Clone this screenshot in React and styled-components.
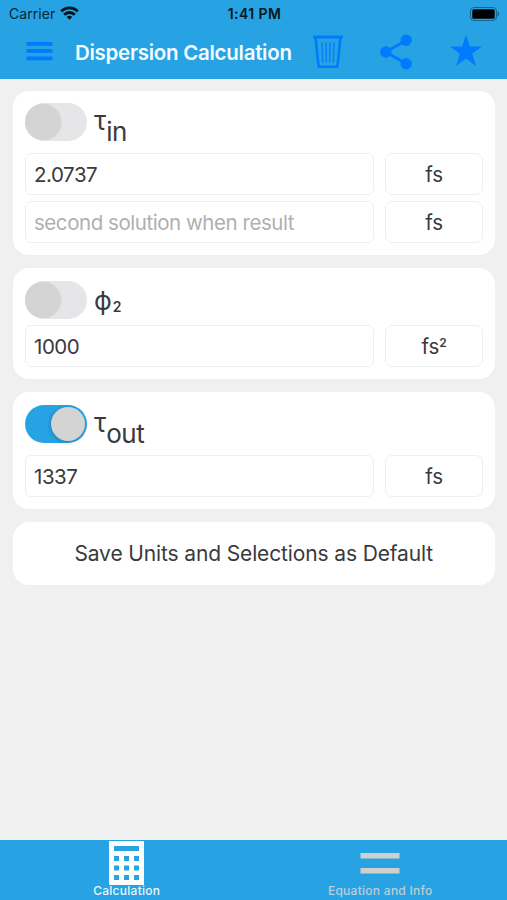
import React, { useState } from 'react';
import styled, { createGlobalStyle } from 'styled-components';

const GlobalStyle = createGlobalStyle`
  * {
    box-sizing: border-box;
  }

  body {
    margin: 0;
    background-color: #f0f0f0;
    font-family: Inter, 'Liberation Sans', sans-serif;
    color: #3a3a3c;
  }
`;

const Screen = styled.div`
  display: flex;
  flex-direction: column;
  height: 900px;
  overflow: hidden;
`;

const Header = styled.header`
  height: 79px;
  flex-shrink: 0;
  background-color: #27a3e3;
`;

const StatusBar = styled.div`
  display: grid;
  grid-template-columns: 1fr auto 1fr;
  align-items: center;
  height: 27px;
  padding: 0 7px 0 9px;
  font-size: 14px;
  color: #0b2533;
`;

const Carrier = styled.div`
  display: flex;
  align-items: center;
  gap: 5px;
  letter-spacing: 0.05px;
`;

const Clock = styled.div`
  font-weight: 600;
  letter-spacing: 0.4px;
  color: #06141c;
`;

const BatteryIcon = styled.svg`
  justify-self: end;
`;

const NavBar = styled.nav`
  display: flex;
  align-items: center;
  height: 50px;
  padding: 0 25px 0 26px;
  color: #007aff;
`;

const IconButton = styled.button`
  display: flex;
  padding: 0;
  margin-left: ${(props) => props.$gap || 0}px;
  border: none;
  background: none;
  color: inherit;
  cursor: pointer;
`;

const Title = styled.h1`
  width: 217px;
  margin: 1px 0 0 22px;
  font-size: 20.5px;
  font-weight: 600;
  letter-spacing: -0.28px;
  white-space: nowrap;
  color: #f4fbff;
`;

const Content = styled.main`
  flex: 1;
  display: flex;
  flex-direction: column;
  gap: 13.25px;
  padding: 11.6px 12.5px 0 13px;
`;

const Card = styled.section`
  padding: 12.5px 12px 12px;
  border-radius: 16px;
  background-color: #fff;
`;

const CardHeader = styled.div`
  display: flex;
  align-items: flex-start;
  gap: 7px;
  height: ${(props) => (props.$tall ? 50 : 44)}px;
`;

const Track = styled.button`
  display: flex;
  justify-content: ${(props) => (props.$on ? 'flex-end' : 'flex-start')};
  align-items: center;
  width: 62px;
  height: 38px;
  padding: ${(props) => (props.$on ? '0 2px' : '0')};
  border: none;
  border-radius: 19px;
  background-color: ${(props) => (props.$on ? '#27a3e3' : '#e6e6e8')};
  cursor: pointer;
`;

const Thumb = styled.span`
  width: ${(props) => (props.$on ? 34 : 36)}px;
  height: ${(props) => (props.$on ? 34 : 36)}px;
  border-radius: 50%;
  background-color: #d4d4d4;
  box-shadow: ${(props) => (props.$on ? '-1px 1px 4px rgba(0, 0, 0, 0.2)' : '1px 0 2px rgba(0, 0, 0, 0.04)')};
`;

const Symbol = styled.div`
  display: flex;
  align-items: flex-start;
  padding-top: ${(props) => props.$top}px;
  font-size: 26px;
  line-height: 32px;
`;

const Subscript = styled.span`
  margin-top: 11px;
  font-size: 26px;
  letter-spacing: -0.4px;
`;

const SmallSubscript = styled.span`
  margin: 6px 0 0 1px;
  font-size: 14px;
  font-weight: 600;
`;

const Fields = styled.div`
  display: grid;
  grid-template-columns: 349px 98px;
  column-gap: 11px;
  row-gap: 6px;
`;

const Input = styled.input`
  min-width: 0;
  height: 42px;
  padding: 1px 8px 0;
  border: 1px solid #efefef;
  border-radius: 6px;
  outline: none;
  background-color: #fff;
  color: #3a3a3c;
  font-family: inherit;
  font-size: 20.5px;
  letter-spacing: -0.45px;

  &::placeholder {
    color: #b0b0b0;
    opacity: 1;
  }
`;

const UnitButton = styled.button`
  height: 42px;
  padding: 1px 0 0;
  border: 1px solid #efefef;
  border-radius: 7px;
  background-color: #fff;
  color: #3a3a3c;
  font-family: inherit;
  font-size: 20.5px;
  letter-spacing: -0.2px;
`;

const Exponent = styled.sup`
  font-size: 12px;
  font-weight: 600;
  line-height: 0;
  vertical-align: 7px;
`;

const SaveButton = styled.button`
  height: 63px;
  border: none;
  border-radius: 16px;
  background-color: #fff;
  color: #3a3a3c;
  font-family: inherit;
  font-size: 21px;
  letter-spacing: -0.13px;
`;

const TabBar = styled.footer`
  display: grid;
  grid-template-columns: 1fr 1fr;
  height: 60px;
  flex-shrink: 0;
  background-color: #27a3e3;
`;

const Tab = styled.button`
  display: flex;
  flex-direction: column;
  align-items: center;
  padding: 1px 0 0;
  border: none;
  background: none;
  color: ${(props) => (props.$active ? '#fff' : '#ccd3d6')};
  font-family: inherit;
  cursor: pointer;
`;

const TabLabel = styled.span`
  margin-top: -1px;
  font-size: 12px;
  font-weight: 500;
  line-height: 14px;
  letter-spacing: 0.27px;
  opacity: 0.9;
`;

const WifiIcon = () => (
  <svg width="19" height="15" viewBox="0 0 19 15" fill="none" stroke="#06141c" strokeWidth="2.8">
    <path d="M1.2 5.2a11.8 11.8 0 0 1 16.6 0" />
    <path d="M4.2 8.7a7.5 7.5 0 0 1 10.6 0" />
    <path d="M9.5 13.8L6.7 11a4 4 0 0 1 5.6 0z" fill="#06141c" stroke="none" />
  </svg>
);

const MenuIcon = () => (
  <svg width="27" height="20" viewBox="0 0 27 20" fill="currentColor">
    <rect x="0.5" y="0" width="26" height="3.8" />
    <rect x="0.5" y="7" width="26" height="3.8" />
    <rect x="0.5" y="14.5" width="26" height="3.8" />
  </svg>
);

const TrashIcon = () => (
  <svg width="32" height="34" viewBox="0 0 32 34" fill="none" stroke="currentColor">
    <path d="M1 2h30" strokeWidth="3" />
    <path d="M3.6 3l3 28.8h18.8l3-28.8" strokeWidth="2.6" />
    <path d="M9.8 7.5l1 20M13.9 7.5l.4 20M18.1 7.5l-.4 20M22.2 7.5l-1 20" strokeWidth="1.3" />
  </svg>
);

const ShareIcon = () => (
  <svg width="32" height="36" viewBox="0 0 32 36" fill="currentColor">
    <path d="M26 6.2L6 18l20 11.8" fill="none" stroke="currentColor" strokeWidth="3" />
    <circle cx="26.2" cy="6.2" r="5.7" />
    <circle cx="5.8" cy="18" r="5.7" />
    <circle cx="26.2" cy="29.8" r="5.7" />
  </svg>
);

const StarIcon = () => (
  <svg width="32" height="34" viewBox="0 0 32 34" fill="currentColor">
    <path d="M16 0l3.9 11.6H32l-9.8 7.2L25.9 31 16 23.6 6.1 31l3.7-12.2L0 11.6h12.1z" />
  </svg>
);

const CalculatorIcon = () => (
  <svg width="35" height="44" viewBox="0 0 35 44">
    <rect width="35" height="44" fill="#fff" />
    <g fill="#27a3e3">
      <rect x="5" y="5" width="25" height="5" />
      {[15, 24.5, 34].map((y) =>
        [5, 15, 25].map((x) => <rect key={`${x}-${y}`} x={x} y={y} width="5" height="5" />)
      )}
    </g>
  </svg>
);

const EquationIcon = () => (
  <svg width="40" height="44" viewBox="0 0 40 44" fill="#cfcfcf">
    <rect x="0.5" y="12" width="39" height="5.5" />
    <rect x="0.5" y="27" width="39" height="5.5" />
  </svg>
);

const Toggle = ({ on, onClick }) => (
  <Track type="button" role="switch" aria-checked={on} $on={on} onClick={onClick}>
    <Thumb $on={on} />
  </Track>
);

const App = () => {
  const [solveFor, setSolveFor] = useState('out');
  const [tauIn, setTauIn] = useState('2.0737');
  const [second, setSecond] = useState('');
  const [phi, setPhi] = useState('1000');
  const [tauOut, setTauOut] = useState('1337');
  const [tab, setTab] = useState('calculation');

  return (
    <Screen>
      <GlobalStyle />
      <Header>
        <StatusBar>
          <Carrier>Carrier <WifiIcon /></Carrier>
          <Clock>1:41 PM</Clock>
          <BatteryIcon width="30" height="14" viewBox="0 0 30 14">
            <rect x="0.5" y="0.5" width="26" height="13" rx="3.5" fill="none" stroke="#16658f" />
            <rect x="2.3" y="2.3" width="22.4" height="9.4" rx="1.5" fill="#000" />
            <path d="M27.5 4.5c2.2.8 2.2 4.2 0 5z" fill="#16658f" />
          </BatteryIcon>
        </StatusBar>
        <NavBar>
          <IconButton><MenuIcon /></IconButton>
          <Title>Dispersion Calculation</Title>
          <IconButton $gap={20}><TrashIcon /></IconButton>
          <IconButton $gap={36}><ShareIcon /></IconButton>
          <IconButton $gap={38}><StarIcon /></IconButton>
        </NavBar>
      </Header>

      <Content>
        <Card>
          <CardHeader $tall>
            <Toggle on={solveFor === 'in'} onClick={() => setSolveFor('in')} />
            <Symbol $top={2}>τ<Subscript>in</Subscript></Symbol>
          </CardHeader>
          <Fields>
            <Input value={tauIn} onChange={(e) => setTauIn(e.target.value)} />
            <UnitButton>fs</UnitButton>
            <Input
              value={second}
              onChange={(e) => setSecond(e.target.value)}
              placeholder="second solution when result"
            />
            <UnitButton>fs</UnitButton>
          </Fields>
        </Card>

        <Card>
          <CardHeader>
            <Toggle on={solveFor === 'phi'} onClick={() => setSolveFor('phi')} />
            <Symbol $top={4}>ϕ<SmallSubscript>2</SmallSubscript></Symbol>
          </CardHeader>
          <Fields>
            <Input value={phi} onChange={(e) => setPhi(e.target.value)} />
            <UnitButton>fs<Exponent>2</Exponent></UnitButton>
          </Fields>
        </Card>

        <Card>
          <CardHeader $tall>
            <Toggle on={solveFor === 'out'} onClick={() => setSolveFor('out')} />
            <Symbol $top={2}>τ<Subscript>out</Subscript></Symbol>
          </CardHeader>
          <Fields>
            <Input value={tauOut} onChange={(e) => setTauOut(e.target.value)} />
            <UnitButton>fs</UnitButton>
          </Fields>
        </Card>

        <SaveButton>Save Units and Selections as Default</SaveButton>
      </Content>

      <TabBar>
        <Tab $active={tab === 'calculation'} onClick={() => setTab('calculation')}>
          <CalculatorIcon />
          <TabLabel>Calculation</TabLabel>
        </Tab>
        <Tab $active={tab === 'equation'} onClick={() => setTab('equation')}>
          <EquationIcon />
          <TabLabel>Equation and Info</TabLabel>
        </Tab>
      </TabBar>
    </Screen>
  );
};

export default App;
